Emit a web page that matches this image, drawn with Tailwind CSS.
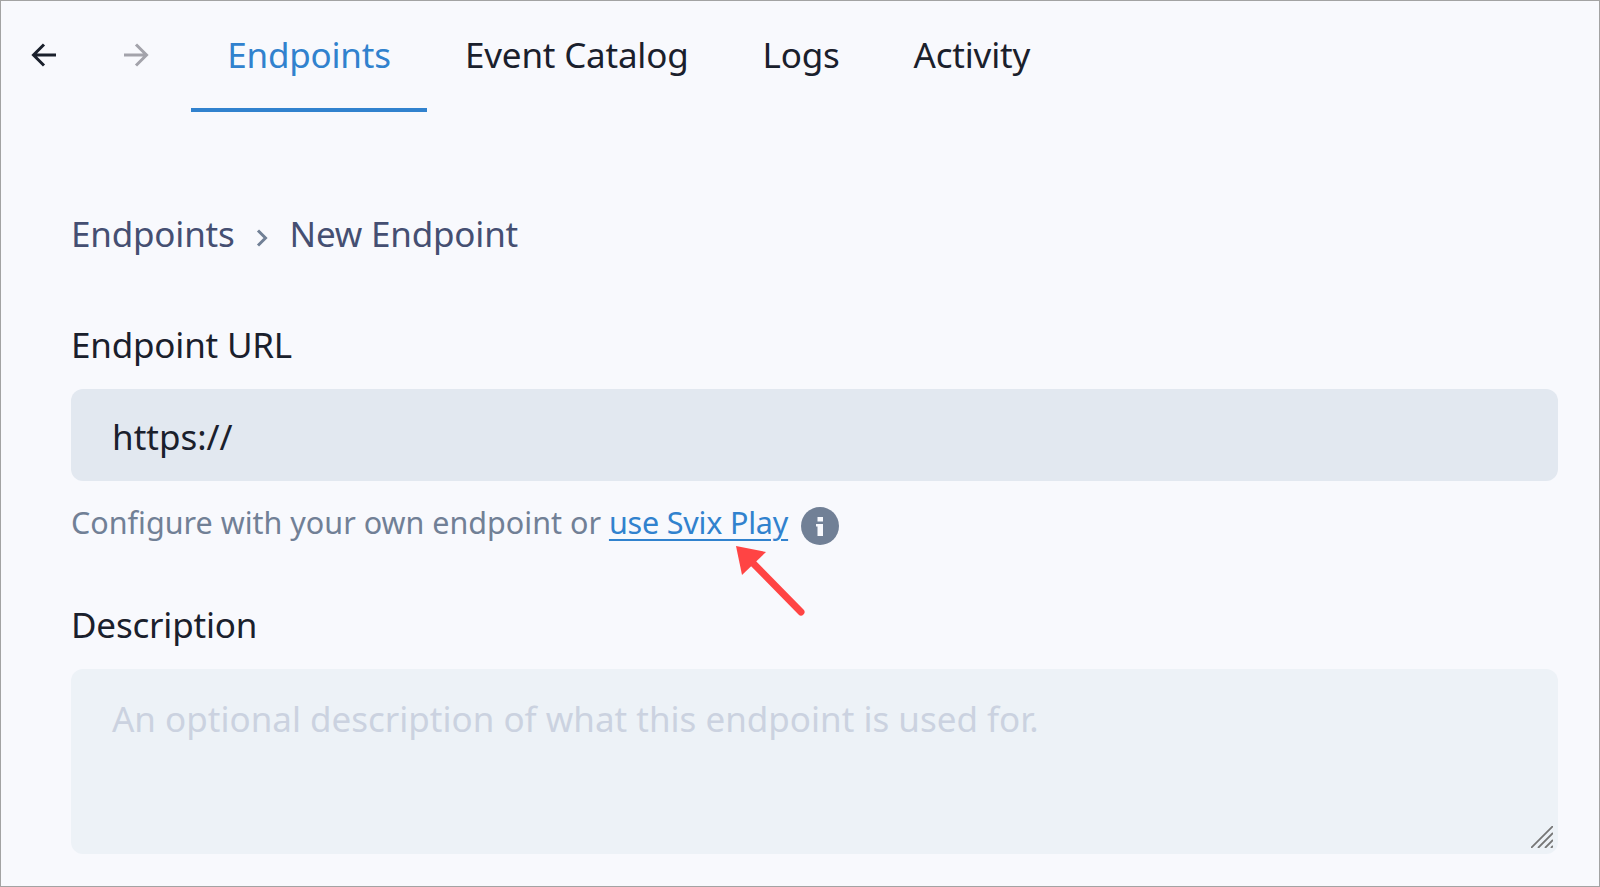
<!DOCTYPE html>
<html lang="en">
<head>
    <meta charset="UTF-8">
    <meta name="viewport" content="width=device-width, initial-scale=1.0">
    <title>New Endpoint</title>
    <script src="https://cdn.jsdelivr.net/npm/@tailwindcss/browser@4"></script>
</head>
<body class="bg-[#f8f9fd] font-['Noto_Sans',sans-serif] overflow-hidden">
    <div class="relative w-[1600px] h-[887px] border border-[#a3a3a3] overflow-hidden">
        <!-- top nav -->
        <nav class="flex items-start h-[112px] text-[35px] tracking-[-0.2px]">
            <div class="flex items-center h-[108px] pl-[30px] gap-[66px] w-[190px]">
                <svg class="w-[26px] h-[26px] text-[#1a202c]" viewBox="0 0 26 26" fill="none" stroke="currentColor" stroke-width="3"><path d="M25 13H3M13 2.500 2.500 13 13 23.500"/></svg>
                <svg class="w-[26px] h-[26px] text-[#a3a3ab]" viewBox="0 0 26 26" fill="none" stroke="currentColor" stroke-width="3"><path d="M1 13h22M13 2.500 23.500 13 13 23.500"/></svg>
            </div>
            <a class="flex items-center justify-center w-[236px] h-[111px] pt-px border-b-4 border-[#3182ce] text-[#3182ce]">Endpoints</a>
            <a class="flex items-center h-[108px] ml-[38px] text-[#1a202c]">Event Catalog</a>
            <a class="flex items-center h-[108px] ml-[74px] text-[#1a202c]">Logs</a>
            <a class="flex items-center h-[108px] ml-[74px] text-[#1a202c]">Activity</a>
        </nav>

        <main class="pl-[70px] pr-[41px] tracking-[-0.2px]">
            <!-- breadcrumb -->
            <div class="flex items-center h-[48px] mt-[97px] text-[35px] text-[#454f72]">
                <span>Endpoints</span>
                <svg class="w-[14px] h-[20px] ml-[20px] mr-[21px] mt-[7px] text-[#718096]" viewBox="0 0 14 20" fill="none" stroke="currentColor" stroke-width="3"><path d="M3 2.500 10.500 10 3 17.500"/></svg>
                <span>New Endpoint</span>
            </div>

            <!-- endpoint url -->
            <label class="block mt-[63px] h-[48px] leading-[48px] text-[35px] text-[#1a202c]">Endpoint URL</label>
            <div class="flex items-center h-[92px] mt-[20px] pl-[41px] pt-[4px] rounded-[12px] bg-[#e2e8f0] text-[35px] tracking-normal text-[#1a202c]">https://</div>
            <div class="relative flex items-center h-[44px] mt-[20px] text-[30.5px] tracking-normal text-[#718096]">
                <span>Configure with your own endpoint or&nbsp;</span>
                <a class="text-[#3182ce] underline underline-offset-[5px] decoration-2 tracking-[-0.2px]">use Svix Play</a>
                <span class="flex items-center justify-center w-[38px] h-[38px] ml-[13px] mt-[6px] rounded-full bg-[#718096]">
                    <svg class="w-[8px] h-[19px]" viewBox="0 0 8 19" fill="#f8f9fd"><rect x="1.500" y="0" width="5.500" height="4.500"/><path d="M0 7h7v12H1.500V9.500H0z"/></svg>
                </span>
                <!-- red annotation arrow -->
                <svg class="absolute left-[660px] top-[27px] w-[90px] h-[90px]" viewBox="0 0 90 90" fill="none">
                    <path d="M70 84 14 27" stroke="#ff4444" stroke-width="7" stroke-linecap="round"/>
                    <path d="M5 18 35 24 11 47z" fill="#ff4444"/>
                </svg>
            </div>

            <!-- description -->
            <label class="block mt-[56px] h-[48px] leading-[48px] text-[35px] text-[#1a202c]">Description</label>
            <div class="relative h-[185px] mt-[20px] pl-[41px] pt-[26px] rounded-[12px] bg-[#edf2f7] text-[35px] tracking-normal leading-[48px] text-[#cbd2e0]">
                An optional description of what this endpoint is used for.
                <svg class="absolute right-[5px] bottom-[6px] w-[22px] h-[22px]" viewBox="0 0 22 22" fill="none" stroke="#767676" stroke-width="1.800"><path d="M0 22 22 0M7 22 22 7M14 22l8-8M20 22l2-2"/></svg>
            </div>
        </main>
    </div>
</body>
</html>
